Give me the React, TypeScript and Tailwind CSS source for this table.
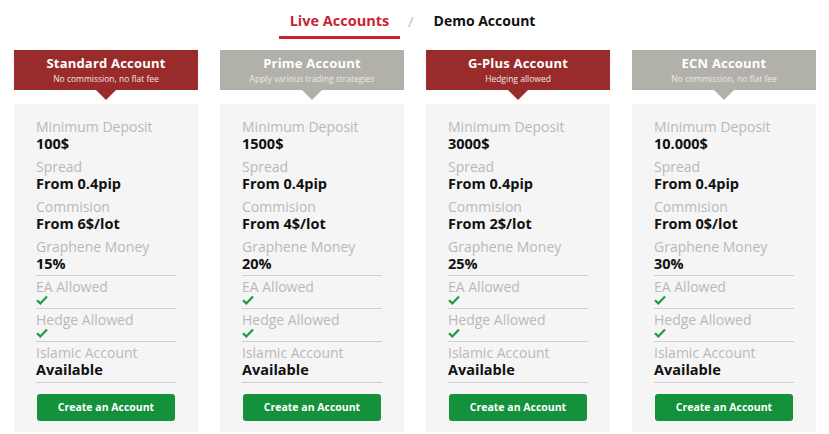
const accounts = [
  { name: "Standard Account", sub: "No commission, no flat fee", red: true, deposit: "100$", commission: "From 6$/lot", money: "15%" },
  { name: "Prime Account", sub: "Apply various trading strategies", red: false, deposit: "1500$", commission: "From 4$/lot", money: "20%" },
  { name: "G-Plus Account", sub: "Hedging allowed", red: true, deposit: "3000$", commission: "From 2$/lot", money: "25%" },
  { name: "ECN Account", sub: "No commission, no flat fee", red: false, deposit: "10.000$", commission: "From 0$/lot", money: "30%" },
];

function Check() {
  return (
    <svg width="12" height="10" viewBox="0 0 12 10" className="block">
      <path d="M1 5.2 L4.3 8.4 L11 1.4" fill="none" stroke="#1f9a3c" strokeWidth="2.2" />
    </svg>
  );
}

const labelCls = "text-[14px] leading-[17px] text-[#b9b9b9]";
const valueCls = "text-[14.5px] leading-[17px] font-bold text-[#111]";

function Item({ label, value }: { label: string; value: string }) {
  return (
    <div className="mb-[6px]">
      <div className={labelCls}>{label}</div>
      <div className={valueCls}>{value}</div>
    </div>
  );
}

function Card({ a }: { a: (typeof accounts)[number] }) {
  const bg = a.red ? "bg-[#992b2b]" : "bg-[#b1b1aa]";
  const arrow = a.red ? "border-t-[#992b2b]" : "border-t-[#b1b1aa]";
  return (
    <div className="w-[184px] flex flex-col">
      <div className={`relative h-[40px] ${bg} text-white text-center pt-[5px]`}>
        <div className="text-[13px] leading-[17px] font-bold tracking-[0.2px]">{a.name}</div>
        <div className="text-[8.5px] leading-[14px] text-[#f1e6e6]">{a.sub}</div>
        <div className={`absolute left-1/2 -translate-x-1/2 top-[40px] w-0 h-0 border-l-[10px] border-r-[10px] border-t-[10px] border-l-transparent border-r-transparent ${arrow}`} />
      </div>
      <div className="mt-[14px] bg-[#f5f5f5] px-[22px] pt-[14px] pb-[11px]">
        <Item label="Minimum Deposit" value={a.deposit} />
        <Item label="Spread" value="From 0.4pip" />
        <Item label="Commision" value={a.commission} />
        <div className="pb-[3px] border-b border-[#cfcfcf]">
          <div className={labelCls}>Graphene Money</div>
          <div className={valueCls}>{a.money}</div>
        </div>
        <div className="pt-[2px] pb-[3px] border-b border-[#cfcfcf]">
          <div className={labelCls}>EA Allowed</div>
          <div className="h-[10px]"><Check /></div>
        </div>
        <div className="pt-[2px] pb-[3px] border-b border-[#cfcfcf]">
          <div className={labelCls}>Hedge Allowed</div>
          <div className="h-[10px]"><Check /></div>
        </div>
        <div className="pt-[2px] pb-[4px] border-b border-[#cfcfcf]">
          <div className={labelCls}>Islamic Account</div>
          <div className={valueCls}>Available</div>
        </div>
        <div className="mt-[11px] h-[27px] w-[138px] ml-[1px] rounded-[3px] bg-[#14913b] text-white text-[10.5px] font-bold flex items-center justify-center">
          Create an Account
        </div>
      </div>
    </div>
  );
}

export default function App() {
  return (
    <div className="w-[829px] h-[434px] bg-white overflow-hidden font-['Open_Sans','Noto_Sans',sans-serif]">
      <div className="h-[50px] flex items-start pt-[9px] pl-[279px]">
        <div className="w-[121px] h-[30px] border-b-[3px] border-[#cc1f2f] text-center text-[14.5px] leading-[22px] font-bold text-[#cc1f2f] pt-[1px]">
          Live Accounts
        </div>
        <div className="ml-[8px] mr-[20px] text-[15px] leading-[22px] text-[#bdbdbd] pt-[1px]">/</div>
        <div className="text-[14px] leading-[22px] font-bold text-[#111] pt-[1px]">Demo Account</div>
      </div>
      <div className="flex gap-[22px] pl-[14px]">
        {accounts.map((a) => (
          <Card key={a.name} a={a} />
        ))}
      </div>
    </div>
  );
}
